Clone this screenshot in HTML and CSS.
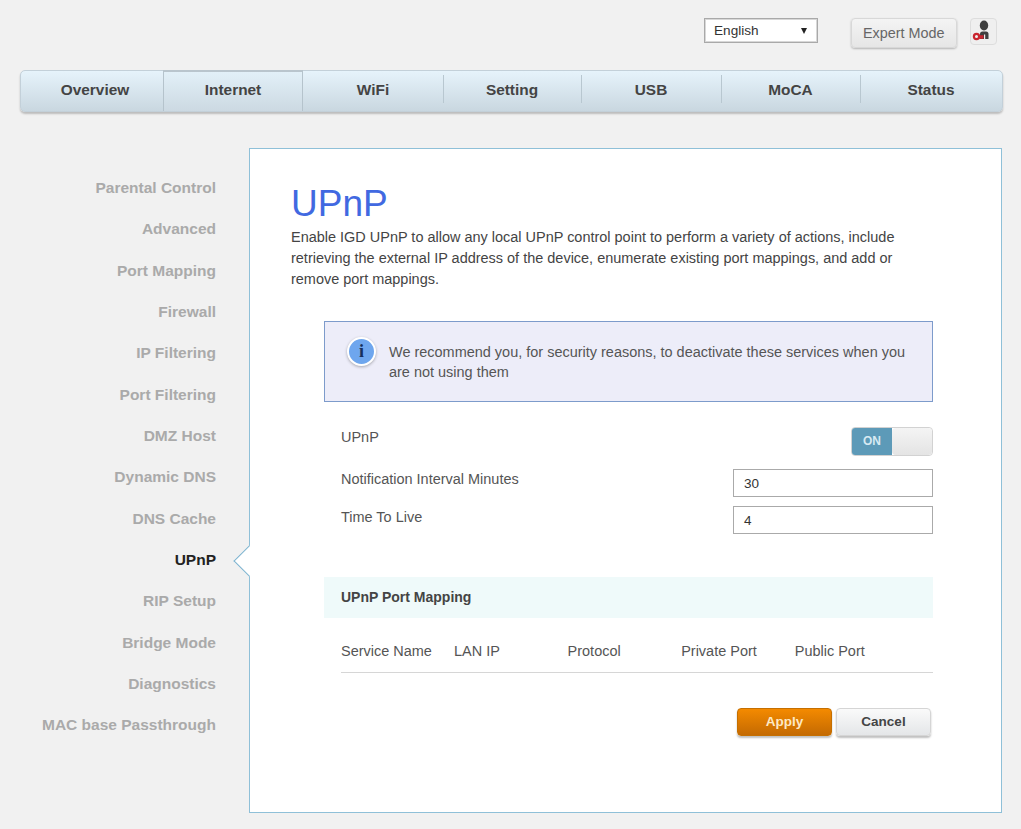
FILE: index.html
```html
<!DOCTYPE html>
<html lang="en">
<head>
<meta charset="utf-8">
<title>UPnP</title>
<link rel="stylesheet" href="styles.css">
</head>
<body>
<header class="topbar">
  <div class="lang"><span>English</span><span class="lang-arrow"></span></div>
  <button class="expert">Expert Mode</button>
  <button class="user" aria-label="User">
    <svg width="25" height="25" viewBox="0 0 25 25">
      <ellipse cx="13" cy="6.5" rx="4.2" ry="5" fill="#3f3f3f"/>
      <path d="M9 20v-5q0-2.5 2.5-2.5h3.5q2.5 0 2.5 2.5v5z" fill="#3f3f3f"/>
      <rect x="13" y="15.5" width="1.2" height="4.5" fill="#efefef"/>
      <circle cx="5.5" cy="17.5" r="2.6" fill="none" stroke="#c9252f" stroke-width="2.2"/>
      <path d="M7.5 16.2h5v3.6h-5z" fill="#c9252f"/>
    </svg>
  </button>
</header>
<nav class="tabs">
  <a class="tab tab-first">Overview</a>
  <a class="tab tab-active">Internet</a>
  <a class="tab">WiFi</a>
  <a class="tab">Setting</a>
  <a class="tab">USB</a>
  <a class="tab">MoCA</a>
  <a class="tab tab-last">Status</a>
</nav>
<div class="main">
  <aside class="side">
    <a>Parental Control</a>
    <a>Advanced</a>
    <a>Port Mapping</a>
    <a>Firewall</a>
    <a>IP Filtering</a>
    <a>Port Filtering</a>
    <a>DMZ Host</a>
    <a>Dynamic DNS</a>
    <a>DNS Cache</a>
    <a class="current">UPnP</a>
    <a>RIP Setup</a>
    <a>Bridge Mode</a>
    <a>Diagnostics</a>
    <a>MAC base Passthrough</a>
  </aside>
  <section class="panel">
    <h1>UPnP</h1>
    <p class="intro">Enable IGD UPnP to allow any local UPnP control point to perform a variety of actions, include retrieving the external IP address of the device, enumerate existing port mappings, and add or remove port mappings.</p>
    <div class="body">
      <div class="info">
        <span class="info-icon">i</span>
        <p>We recommend you, for security reasons, to deactivate these services when you are not using them</p>
      </div>
      <div class="form">
        <div class="row row-toggle">
          <label>UPnP</label>
          <div class="toggle"><span class="toggle-on">ON</span><span class="toggle-knob"></span></div>
        </div>
        <div class="row row-interval">
          <label>Notification Interval Minutes</label>
          <div class="field">30</div>
        </div>
        <div class="row row-ttl">
          <label>Time To Live</label>
          <div class="field">4</div>
        </div>
      </div>
      <h2 class="section">UPnP Port Mapping</h2>
      <div class="thead">
        <span>Service Name</span>
        <span>LAN IP</span>
        <span>Protocol</span>
        <span>Private Port</span>
        <span>Public Port</span>
      </div>
      <div class="actions">
        <button class="btn btn-apply">Apply</button>
        <button class="btn btn-cancel">Cancel</button>
      </div>
    </div>
  </section>
</div>
</body>
</html>
```
FILE: styles.css
```css
* { box-sizing: border-box; }
html, body { margin: 0; height: 829px; overflow: hidden; }
body {
  background: #f1f1f1;
  font-family: "Liberation Sans", Arial, sans-serif;
  color: #4a4a4a;
  font-size: 14.47px;
}
button { font-family: inherit; padding: 0; }

.topbar {
  display: flex;
  align-items: flex-start;
  height: 70px;
  padding: 18px 24px 0 704px;
}
.lang {
  width: 114px;
  height: 25px;
  background: #fff;
  border: 1px solid #a9a9a9;
  box-shadow: inset 0 0 0 1px #d8d8d8;
  display: flex;
  align-items: center;
  justify-content: space-between;
  padding: 0 10px 0 9px;
  font-size: 13.6px;
  color: #333;
}
.lang-arrow {
  width: 0; height: 0;
  border-left: 3.5px solid transparent;
  border-right: 3.5px solid transparent;
  border-top: 6px solid #222;
}
.expert {
  margin-left: 33px;
  width: 107px;
  height: 30px;
  border: 1px solid #d8d8d8;
  border-radius: 4px;
  background: linear-gradient(#f4f4f4, #e6e6e6);
  box-shadow: 0 1px 2px rgba(0,0,0,.25);
  color: #666;
  font-size: 14.4px;
}
.user {
  margin-left: 13px;
  width: 27px;
  height: 27px;
  border: 1px solid #ddd;
  border-radius: 4px;
  background: #efefef;
  display: flex;
  align-items: center;
  justify-content: center;
}

.tabs {
  display: grid;
  grid-template-columns: 142px 140px 140px 138px 140px 139px 142px;
  width: 983px;
  height: 42px;
  margin-left: 20px;
  background: linear-gradient(#e6f3fb, #c9d7e0);
  border: 1px solid #c3d0d9;
  border-radius: 5px;
  box-shadow: 0 2px 2px rgba(0,0,0,.22);
}
.tab {
  display: flex;
  align-items: center;
  justify-content: center;
  font-weight: bold;
  font-size: 15.4px;
  padding-bottom: 2px;
  color: #444;
  position: relative;
}
.tab-first { padding-left: 6px; }
.tab + .tab::before {
  content: "";
  position: absolute;
  left: 0; top: 4px; bottom: 8px;
  width: 1px;
  background: #b8c7d0;
}
.tab-active {
  background: linear-gradient(#e2f0f8, #ccd9e2);
  border-left: 1px solid #b5c3cc;
  border-right: 1px solid #b5c3cc;
  border-top: 2px solid #b9c5cd;
  margin-top: -1px;
  padding-bottom: 3px;
}
.tab-active::before, .tab-active + .tab::before { display: none; }

.main {
  display: flex;
  align-items: flex-start;
  margin-top: 36px;
}
.side {
  width: 249px;
  padding: 31px 33px 0 0;
  display: flex;
  flex-direction: column;
  align-items: flex-end;
  gap: 24.35px;
}
.side a {
  font-weight: bold;
  font-size: 15.5px;
  line-height: 17px;
  color: #aaa;
  white-space: nowrap;
}
.side a.current { color: #222; position: relative; }
.side a.current::after {
  content: "";
  position: absolute;
  left: calc(100% + 22px);
  top: -1px;
  width: 21px;
  height: 21px;
  background: #fff;
  border-left: 1px solid #7db3cf;
  border-bottom: 1px solid #7db3cf;
  transform: rotate(45deg);
  z-index: 1;
}

.panel {
  width: 753px;
  height: 665px;
  background: #fff;
  border: 1px solid #8fc0d8;
  padding: 36px 68px 0 41px;
}
h1 {
  margin: 0;
  font-weight: normal;
  font-size: 37px;
  line-height: 38px;
  color: #4169e1;
}
.intro {
  margin: 4px 0 0;
  line-height: 21px;
  color: #444;
}
.body { padding: 31px 0 0 33px; }
.info {
  height: 81px;
  background: #ededf9;
  border: 1px solid #7d9bcb;
  display: flex;
  padding: 15px 20px 0 22px;
}
.info-icon {
  flex: none;
  width: 29px;
  height: 29px;
  border-radius: 50%;
  background: #6ea6ee;
  border: 2px solid #fff;
  box-shadow: 0 1px 3px rgba(0,0,0,.3);
  color: #16305e;
  font: bold 18px/25px "Liberation Serif", serif;
  text-align: center;
}
.info p {
  margin: 5px 0 0 13px;
  line-height: 20px;
  color: #555;
}

.form { padding: 25px 0 0 17px; }
.row { display: flex; justify-content: space-between; }
.row label { color: #555; }
.row-toggle { height: 42px; }
.row-toggle label { padding-top: 2px; }
.row-interval { height: 37px; }
.row-interval label { padding-top: 2px; }
.row-ttl { height: 28px; }
.row-ttl label { padding-top: 3px; }
.toggle {
  width: 82px;
  height: 29px;
  display: flex;
  border-radius: 4px;
  overflow: hidden;
  border: 1px solid #d2d2d2;
}
.toggle-on {
  width: 40px;
  background: #5d9ab8;
  color: #d7e9f2;
  font-weight: bold;
  font-size: 12px;
  line-height: 27px;
  text-align: center;
}
.toggle-knob {
  flex: 1;
  background: linear-gradient(#f4f4f4, #e4e4e4);
  border-radius: 4px;
}
.field {
  width: 200px;
  height: 28px;
  background: #fff;
  border: 1px solid #aaa;
  padding-left: 10px;
  line-height: 27px;
  font-size: 13.5px;
  color: #333;
}

.section {
  margin: 43px 0 0;
  height: 41px;
  background: #effafa;
  padding-left: 17px;
  font-size: 14px;
  line-height: 41px;
  font-weight: bold;
  color: #444;
}
.thead {
  margin: 0 0 0 17px;
  height: 55px;
  padding-top: 25px;
  display: grid;
  grid-template-columns: 113px repeat(4, 113.6px);
  border-bottom: 1px solid #d6d6d6;
  color: #555;
}
.actions {
  display: flex;
  justify-content: flex-end;
  gap: 4px;
  margin: 35px 2px 0 0;
}
.btn {
  width: 95px;
  height: 28px;
  padding-bottom: 2px;
  border-radius: 4px;
  font-weight: bold;
  font-size: 13.5px;
  box-shadow: 0 2px 2px rgba(0,0,0,.25);
}
.btn-apply {
  border: 1px solid #c56f00;
  background: linear-gradient(#f48a00, #c46a02);
  color: #fde9c5;
}
.btn-cancel {
  border: 1px solid #d5d5d5;
  background: linear-gradient(#fafafa, #e4e6e8);
  color: #444;
}
```
